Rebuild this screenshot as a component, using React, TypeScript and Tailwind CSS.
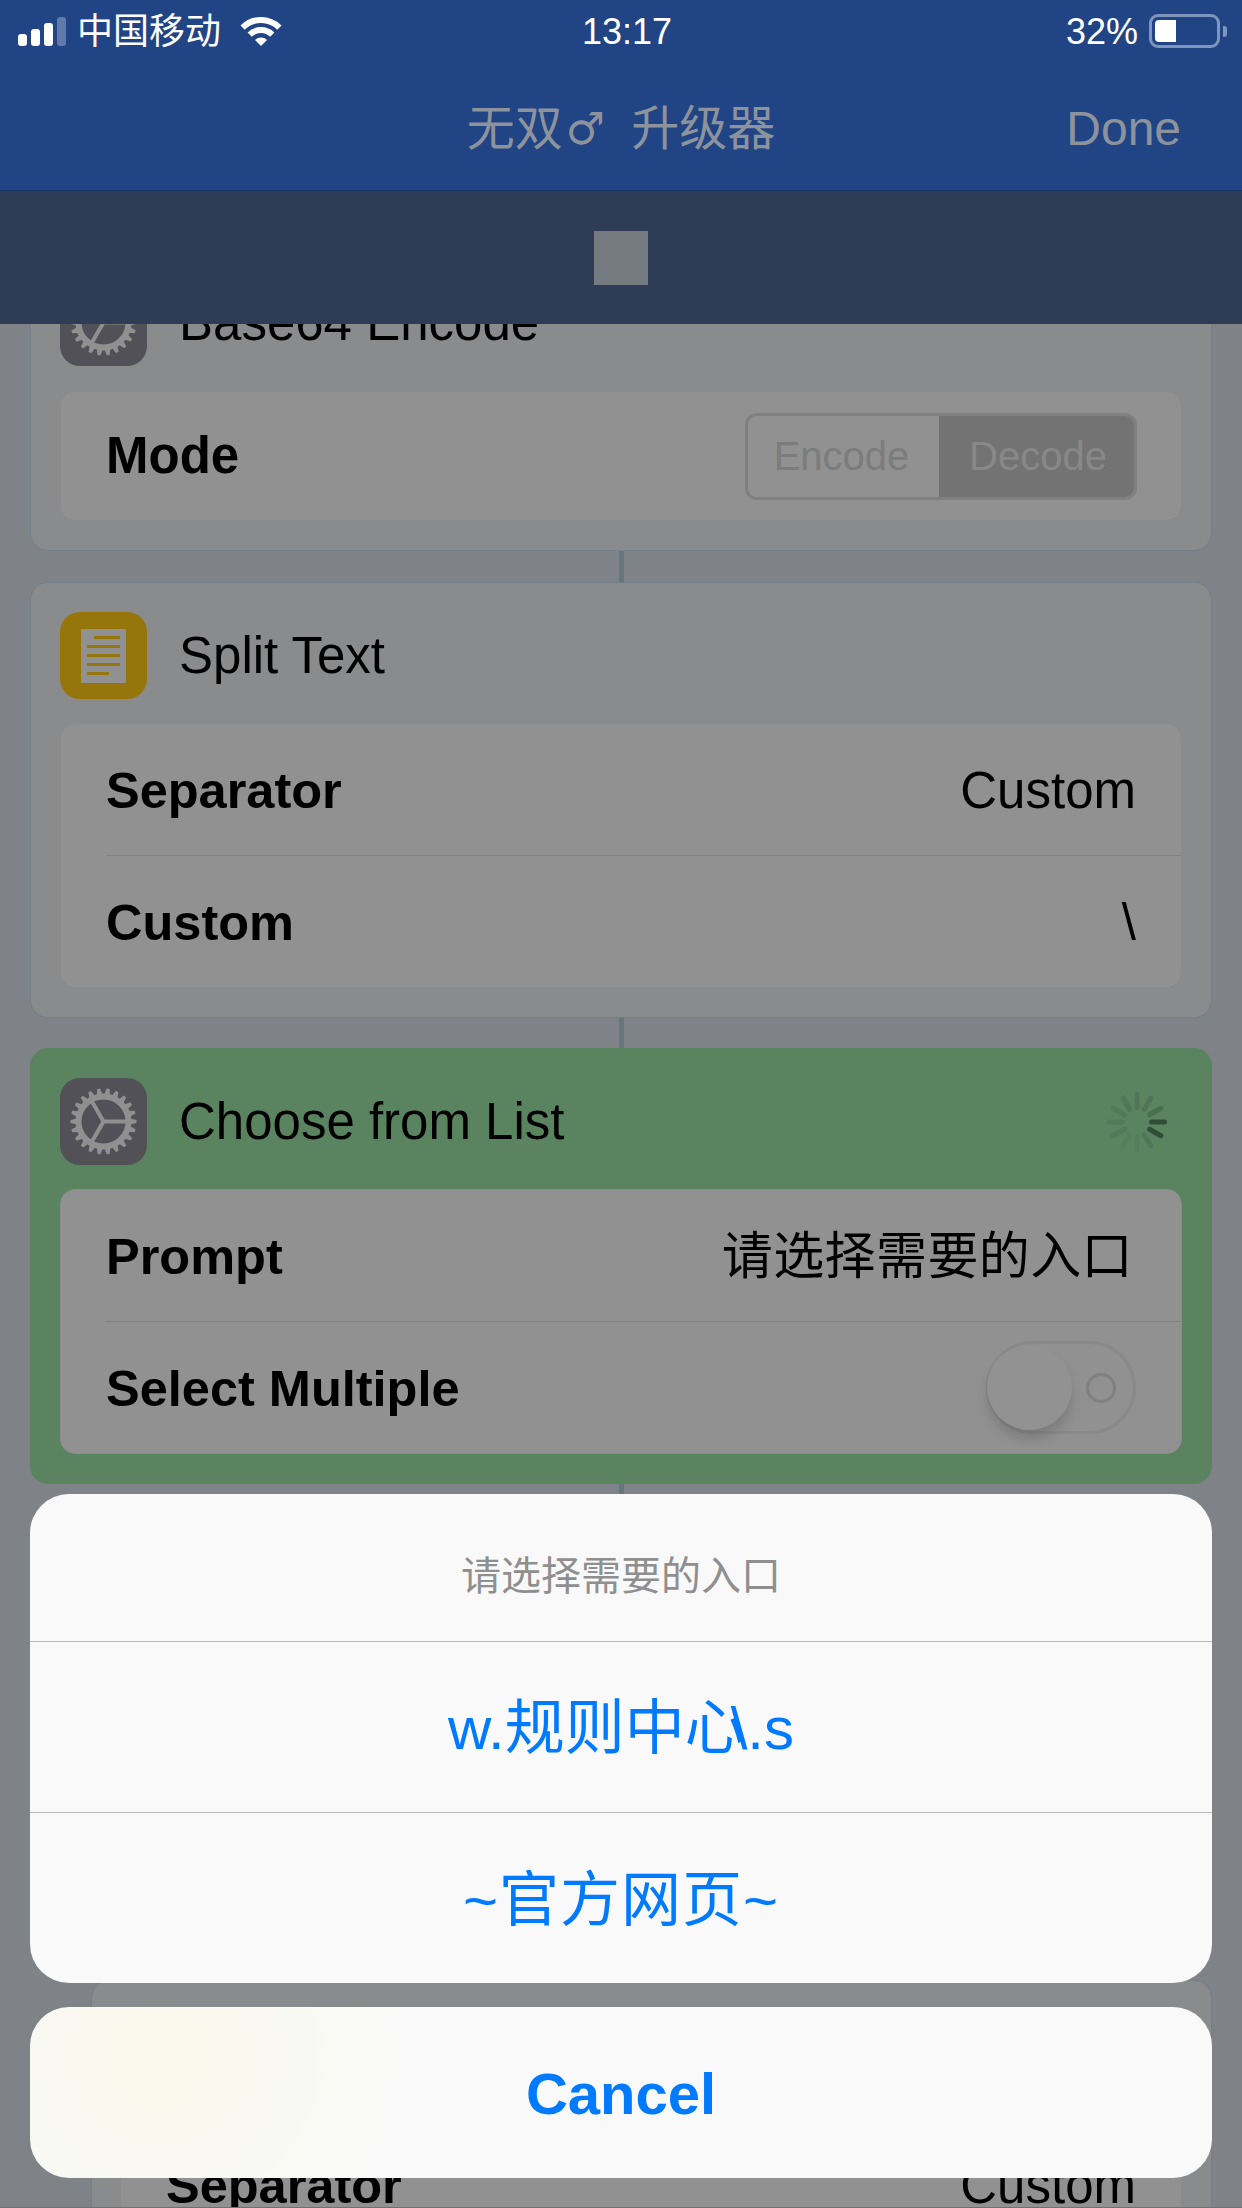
import type { ReactNode } from "react";

const teeth = Array.from({ length: 22 }, (_, i) => (i * 360) / 22);
const spokes = Array.from({ length: 12 }, (_, i) => i * 30);
// spinner colour per spoke, clockwise from 12 o'clock
const spokeColors = ["#4e7655", "#4e7655", "#48704f", "#2f4e35", "#2f4e35", "#4f7856", "#547e5b", "#557e5c", "#527a59", "#527a59", "#527a59", "#4f7856"];

function GearIcon() {
  return (
    <div className="w-[87px] h-[87px] rounded-[20px] bg-[#525157] shrink-0">
      <svg width="87" height="87" viewBox="0 0 87 87" fill="none" stroke="#909090">
        <circle cx="43.5" cy="43.5" r="25" strokeWidth="6" />
        {teeth.map((a) => (
          <polygon key={a} points="40.5,17 46.5,17 45,10.5 42,10.5" fill="#909090" stroke="none" transform={`rotate(${a + 8} 43.5 43.5)`} />
        ))}
        <path d="M43.5 43.5H69M43.5 43.5L30.5 21M43.5 43.5L30.5 66" strokeWidth="4" />
      </svg>
    </div>
  );
}

function DocIcon() {
  return (
    <div className="w-[87px] h-[87px] rounded-[20px] bg-[#96750b] shrink-0 flex items-center justify-center">
      <div className="w-[45px] h-[54px] bg-[#919191] flex flex-col items-end justify-center gap-[6px] px-[6px]">
        <div className="w-[26px] h-[3px] bg-[#96750b]" />
        <div className="w-[33px] h-[3px] bg-[#96750b]" />
        <div className="w-[33px] h-[3px] bg-[#96750b]" />
        <div className="w-[33px] h-[3px] bg-[#96750b]" />
        <div className="w-[22px] h-[3px] bg-[#96750b] mr-[11px]" />
      </div>
    </div>
  );
}

function Spinner() {
  return (
    <svg width="64" height="64" viewBox="0 0 64 64" className="mr-[13px]">
      {spokes.map((a, i) => (
        <line key={a} x1="32" y1="17.5" x2="32" y2="4.5" stroke={spokeColors[i]} strokeWidth="5" strokeLinecap="round" transform={`rotate(${a} 32 32)`} />
      ))}
    </svg>
  );
}

function Card({ icon, title, right, className, children }: { icon: ReactNode; title: string; right?: ReactNode; className: string; children: ReactNode }) {
  return (
    <div className={`mx-[30px] rounded-[18px] border p-[29px] ${className}`}>
      <div className="h-[87px] flex items-center">
        {icon}
        <span className="ml-[32px] pt-[2px] flex-1 text-[51px] text-black">{title}</span>
        {right}
      </div>
      {children}
    </div>
  );
}

function Row({ label, children }: { label: string; children: ReactNode }) {
  return (
    <div className="h-[131px] flex items-center justify-between pl-[45px] pr-[45px]">
      <span className="pt-[3px] text-[50.5px] font-bold text-black">{label}</span>
      {children}
    </div>
  );
}

function Connector({ className }: { className: string }) {
  return <div className={`w-[5px] mx-auto bg-[#66767f] ${className}`} />;
}

export default function App() {
  return (
    <div className="relative h-[2208px] w-[1242px] overflow-hidden flex flex-col border-b border-[#6e7074] bg-[#7f8287] font-['Liberation_Sans','Noto_Sans_CJK_SC',sans-serif]">
      <header className="bg-[#214485] h-[191px] shrink-0 border-b border-[#1d3763]">
        <div className="h-[62px] flex items-center text-white text-[36px]">
          <div className="w-[582px] flex items-center pl-[18px]">
            <div className="flex items-end gap-[4px] h-[29px] mr-[11px]">
              <div className="w-[9px] h-[12px] rounded-[3px] bg-white" />
              <div className="w-[9px] h-[17px] rounded-[3px] bg-white" />
              <div className="w-[9px] h-[23px] rounded-[3px] bg-white" />
              <div className="w-[9px] h-[29px] rounded-[3px] bg-[#5f7aab]" />
            </div>
            <span className="pt-[2px]">中国移动</span>
            <svg width="42" height="30" viewBox="0 0 42 30" fill="none" stroke="white" className="ml-[19px]">
              <path d="M2.6 11.6A26 26 0 0 1 39.4 11.6" strokeWidth="6" />
              <path d="M9.7 18.7A16 16 0 0 1 32.3 18.7" strokeWidth="6" />
              <path d="M15 24L21 30L27 24A8.5 8.5 0 0 0 15 24Z" fill="white" stroke="none" />
            </svg>
          </div>
          <span className="pt-[2px]">13:17</span>
          <div className="flex-1 flex items-center justify-end pr-[15px]">
            <span className="pt-[2px] mr-[11px]">32%</span>
            <div className="w-[71px] h-[34px] rounded-[9px] border-[3px] border-[#7f95bc] p-[3px]">
              <div className="w-[21px] h-full bg-white rounded-l-[4px]" />
            </div>
            <div className="w-[4px] h-[11px] ml-[3px] rounded-r-[3px] bg-[#7f95bc]" />
          </div>
        </div>
        <div className="h-[128px] pt-[5px] flex items-center text-[48px] text-[#8d939c]">
          <div className="flex-1" />
          <span className="flex items-center">
            无双
            <span className="font-['DejaVu_Sans',sans-serif] text-[44px] ml-[3px] mr-[26px]">♂</span>
            升级器
          </span>
          <div className="flex-1 text-right">
            <span className="mr-[61px]">Done</span>
          </div>
        </div>
      </header>

      <div className="bg-[#2e3d55] h-[133px] shrink-0 flex items-center justify-center">
        <div className="w-[54px] h-[54px] bg-[#767a81]" />
      </div>

      <main className="flex-1 min-h-0 overflow-hidden">
        <div className="mt-[-75px]">
          <Card icon={<GearIcon />} title="Base64 Encode" className="bg-[#8a8b8d] border-[#71808a]">
            <div className="mt-[25px] h-[130px] rounded-[15px] border border-[#898b8d] bg-[#919191] flex items-center justify-between pl-[45px] pr-[44px]">
              <span className="text-[51px] font-bold text-black">Mode</span>
              <div className="w-[392px] h-[87px] rounded-[12px] border-[3px] border-[#808080] flex overflow-hidden text-[40px]">
                <div className="w-[191px] pr-[4px] bg-[#919191] text-[#7c7c7c] flex items-center justify-center">Encode</div>
                <div className="flex-1 pl-[3px] bg-[#737373] text-[#888888] flex items-center justify-center">Decode</div>
              </div>
            </div>
          </Card>
          <Connector className="h-[31px]" />
          <Card icon={<DocIcon />} title="Split Text" className="bg-[#8a8b8d] border-[#71808a]">
            <div className="mt-[24px] rounded-[15px] border border-[#898b8d] bg-[#919191]">
              <Row label="Separator">
                <span className="pt-[3px] text-[51px] text-black">Custom</span>
              </Row>
              <div className="ml-[45px] h-px bg-[#808285]" />
              <Row label="Custom">
                <span className="pt-[3px] text-[51px] text-black">\</span>
              </Row>
            </div>
          </Card>
          <Connector className="h-[30px]" />
          <Card icon={<GearIcon />} title="Choose from List" right={<Spinner />} className="bg-[#5a8360] border-[#5a8360]">
            <div className="mt-[24px] rounded-[15px] border border-[#898b8d] bg-[#919191]">
              <Row label="Prompt">
                <span className="pt-[3px] text-[51px] tracking-[0.4px] mr-[3px] text-black">请选择需要的入口</span>
              </Row>
              <div className="ml-[45px] h-px bg-[#808285]" />
              <Row label="Select Multiple">
                <div className="relative w-[150px] h-[93px] rounded-full border-[3px] border-[#898989] flex items-center justify-end pr-[17px]">
                  <div className="w-[30px] h-[30px] rounded-full border-[3px] border-[#808080]" />
                  <div className="absolute left-[-2px] top-[1px] w-[85px] h-[85px] rounded-full bg-[#929292] shadow-[0_9px_12px_rgba(0,0,0,0.14)]" />
                </div>
              </Row>
            </div>
          </Card>
          <Connector className="h-[496px]" />
          <div className="ml-[91px] mr-[30px] rounded-[18px] border border-[#71808a] bg-[#8a8b8d] pt-[137px] pb-[29px] pl-[28px] pr-[29px]">
            <div className="rounded-[15px] bg-[#919191] border border-[#898b8d]">
              <Row label="Separator">
                <span className="pt-[3px] text-[51px] text-black">Custom</span>
              </Row>
            </div>
          </div>
        </div>
      </main>

      {/* action sheet over the dimmed workflow */}
      <div className="absolute left-[30px] right-[30px] top-[1494px] flex flex-col gap-[24px]">
        <div className="rounded-[39px] bg-[#f9f9fa] overflow-hidden flex flex-col">
          <div className="h-[147px] pt-[16px] flex items-center justify-center text-[40px] text-[#8f8f8f]">请选择需要的入口</div>
          <div className="h-px bg-[#b9b9bc]" />
          <div className="h-[170px] pt-[4px] flex items-center justify-center text-[60px] text-[#007aff]">
            w.规则中<span className="tracking-[-14px]">心</span>
            <span>\.s</span>
          </div>
          <div className="h-px bg-[#b9b9bc]" />
          <div className="h-[170px] pt-[5px] flex items-center justify-center text-[60px] tracking-[1px] text-[#007aff]">~官方网页~</div>
        </div>
        <div className="h-[171px] pt-[2px] rounded-[39px] flex items-center justify-center bg-[radial-gradient(circle_at_130px_50px,#f9f9ec,#f9f9fa_260px)] text-[58px] font-bold text-[#007aff]">Cancel</div>
      </div>
    </div>
  );
}
